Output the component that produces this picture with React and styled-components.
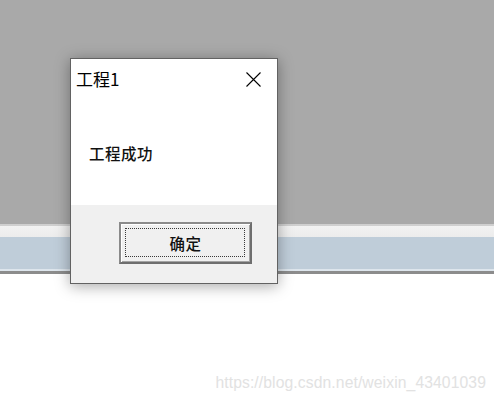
import styled, { createGlobalStyle } from 'styled-components';

const Global = createGlobalStyle`
    html, body{
        margin: 0;
        padding: 0;
        background: #ffffff;
    }
    body{
        font-family: "Noto Sans CJK SC", "Noto Sans", sans-serif;
    }
`

const Screen = styled.div`
    position: relative;
    width: 494px;
    height: 401px;
    overflow: hidden;
    display: flex;
    flex-direction: column;
    background: #ffffff;
`

const Band = styled.div`
    flex: 0 0 ${p => p.h}px;
    background: ${p => p.bg};
`

const Watermark = styled.div`
    position: absolute;
    right: 8px;
    bottom: 9px;
    font-family: "Liberation Sans", Arial, sans-serif;
    font-size: 15.7px;
    color: #e2e2e2;
    letter-spacing: 0.1px;
`

const Dialog = styled.div`
    position: absolute;
    left: 70px;
    top: 58px;
    width: 206px;
    height: 224px;
    border: 1px solid #626262;
    background: #ffffff;
    box-shadow: 0 2px 14px rgba(0, 0, 0, 0.35);
    display: flex;
    flex-direction: column;
`

const TitleBar = styled.div`
    height: 38px;
    display: flex;
    align-items: center;
    justify-content: space-between;
    padding: 0 16px 0 5px;
`

const Title = styled.span`
    font-size: 17px;
    color: #000;
    line-height: 1;
    margin-top: 1px;
`

const Close = styled.div`
    width: 15px;
    height: 15px;
    display: flex;
    margin-top: 2px;
    svg{ display: block; }
`

const Body = styled.div`
    flex: 1;
    display: flex;
    align-items: center;
    padding: 3px 0 0 18px;
`

const Message = styled.span`
    font-size: 15.5px;
    font-weight: 500;
    color: #111;
    letter-spacing: 0.5px;
`

const Footer = styled.div`
    flex: 0 0 78px;
    background: #f0f0f0;
    display: flex;
    justify-content: flex-end;
    padding: 17px 25px 0 0;
    box-sizing: border-box;
`

const Button = styled.button`
    position: relative;
    width: 133px;
    height: 42px;
    background: #f0f0f0;
    border: 2px solid #6e6e6e;
    border-top-color: #8a8a8a;
    border-left-color: #8a8a8a;
    box-shadow: inset 1px 1px 0 #ffffff, inset -1px -1px 0 #a3a3a3;
    font-family: "Noto Sans CJK SC", sans-serif;
    font-size: 15.5px;
    font-weight: 500;
    color: #111;
    padding: 0;
    letter-spacing: 0.5px;
    &::after{
        content: '';
        position: absolute;
        inset: 4px 5px 5px 4px;
        border: 1px dotted #3a3a3a;
    }
`

function App(){
    return(
        <Screen>
            <Global />
            <Band h={224} bg="#a9a9a9" />
            <Band h={2} bg="#cfcfcf" />
            <Band h={11} bg="linear-gradient(#f2f2f2, #ececec)" />
            <Band h={32} bg="#bfcdd9" />
            <Band h={2} bg="#dde5ec" />
            <Band h={3} bg="#8c8c8c" />
            <Band h={127} bg="#ffffff" />
            <Watermark>https://blog.csdn.net/weixin_43401039</Watermark>
            <Dialog>
                <TitleBar>
                    <Title>工程1</Title>
                    <Close>
                        <svg width="15" height="15" viewBox="0 0 15 15">
                            <path d="M0.5 0.5 L14.5 14.5 M14.5 0.5 L0.5 14.5" stroke="#000" strokeWidth="1.1" fill="none" />
                        </svg>
                    </Close>
                </TitleBar>
                <Body>
                    <Message>工程成功</Message>
                </Body>
                <Footer>
                    <Button>确定</Button>
                </Footer>
            </Dialog>
        </Screen>
    )
}

export default App
